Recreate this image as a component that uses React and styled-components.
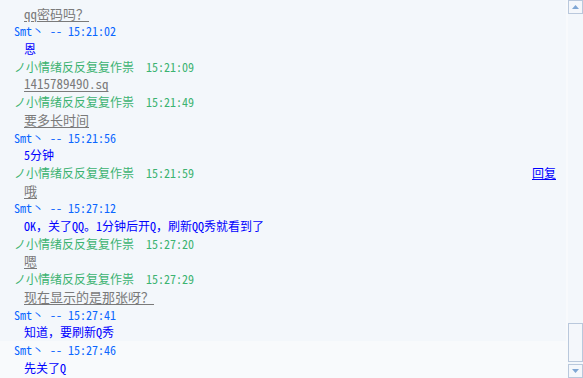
import React from "react";
import styled, { createGlobalStyle } from "styled-components";

const GlobalStyle = createGlobalStyle`
  html, body {
    margin: 0;
    padding: 0;
    background: #f8fafc;
    overflow: hidden;
  }
`;

const Frame = styled.div`
  display: flex;
  width: 583px;
  height: 378px;
  font-family: "Noto Sans Mono CJK SC", "Noto Sans CJK SC", "DejaVu Sans Mono", monospace;
`;

const ChatArea = styled.div`
  width: 568px;
  height: 100%;
  overflow: hidden;
`;

const Panel = styled.div`
  width: 566px;
  padding-top: 4px;
  background: ${(p) => (p.$tail ? "transparent" : "#f3f7fb")};
  ${(p) => p.$tail && "padding-top: 0;"}
`;

const Header = styled.div`
  display: flex;
  align-items: center;
  height: 17px;
  padding-left: 14px;
  font-size: 12px;
  white-space: pre;
  color: ${(p) => (p.$self ? "#0a66ff" : "#3cb371")};
`;

const Grow = styled.span`
  flex: 1;
`;

const Reply = styled.a`
  margin-right: 10px;
  color: #0000ff;
  text-decoration: underline;
  cursor: pointer;
`;

const Message = styled.div`
  display: flex;
  align-items: center;
  height: 18.4px;
  padding-left: 24px;
  white-space: pre;
  font-size: ${(p) => (p.$quoted ? "13px" : "12px")};
  color: ${(p) => (p.$quoted ? "#7a7a7a" : "#0000ff")};
  text-decoration: ${(p) => (p.$quoted ? "underline" : "none")};
  text-underline-offset: 2px;
`;

const Scrollbar = styled.div`
  display: flex;
  flex-direction: column;
  width: 15px;
  height: 100%;
  background: #f3f7fb;
`;

const ScrollButton = styled.div`
  display: flex;
  align-items: center;
  justify-content: center;
  height: 14px;
  box-sizing: border-box;
  border: 1px solid #b9c8dc;
  background: #f4f7fb;
`;

const Track = styled.div`
  flex: 1;
  display: flex;
  flex-direction: column;
  justify-content: flex-end;
  padding-bottom: 2px;
`;

const Thumb = styled.div`
  height: 39px;
  box-sizing: border-box;
  border: 1px solid #b9c8dc;
  background: #f4f7fb;
`;

const Arrow = ({ up }) => (
  <svg width="7" height="4" viewBox="0 0 7 4">
    <path d={up ? "M3.5 0 L7 4 L0 4 Z" : "M0 0 L7 0 L3.5 4 Z"} fill="#7fa6d4" />
  </svg>
);

const NAME_SELF = "Smt丶 -- ";
const NAME_OTHER = "ノ小情绪反反复复作祟  ";

const rows = [
  { who: "other", time: "15:21:02", text: "恩", self: true },
  { who: "other", time: "15:21:09", text: "1415789490.sq" },
  { who: "other", time: "15:21:49", text: "要多长时间" },
  { time: "15:21:56", text: "5分钟", self: true },
  { time: "15:21:59", text: "哦", reply: true },
  { time: "15:27:12", text: "OK，关了QQ。1分钟后开Q，刷新QQ秀就看到了", self: true },
  { time: "15:27:20", text: "嗯" },
  { time: "15:27:29", text: "现在显示的是那张呀？" },
  { time: "15:27:41", text: "知道，要刷新Q秀", self: true },
];

function Entry({ row }) {
  return (
    <>
      <Header $self={row.self}>
        {row.self ? NAME_SELF : NAME_OTHER}
        {row.time}
        <Grow />
        {row.reply && <Reply>回复</Reply>}
      </Header>
      <Message $quoted={!row.self}>{row.text}</Message>
    </>
  );
}

export default function App() {
  return (
    <>
      <GlobalStyle />
      <Frame>
        <ChatArea>
          <Panel>
            <Message $quoted>qq密码吗？</Message>
            {rows.map((row) => (
              <Entry key={row.time} row={row} />
            ))}
          </Panel>
          <Panel $tail>
            <Entry row={{ time: "15:27:46", text: "先关了Q", self: true }} />
          </Panel>
        </ChatArea>
        <Scrollbar>
          <ScrollButton>
            <Arrow up />
          </ScrollButton>
          <Track>
            <Thumb />
          </Track>
          <ScrollButton>
            <Arrow />
          </ScrollButton>
        </Scrollbar>
      </Frame>
    </>
  );
}
